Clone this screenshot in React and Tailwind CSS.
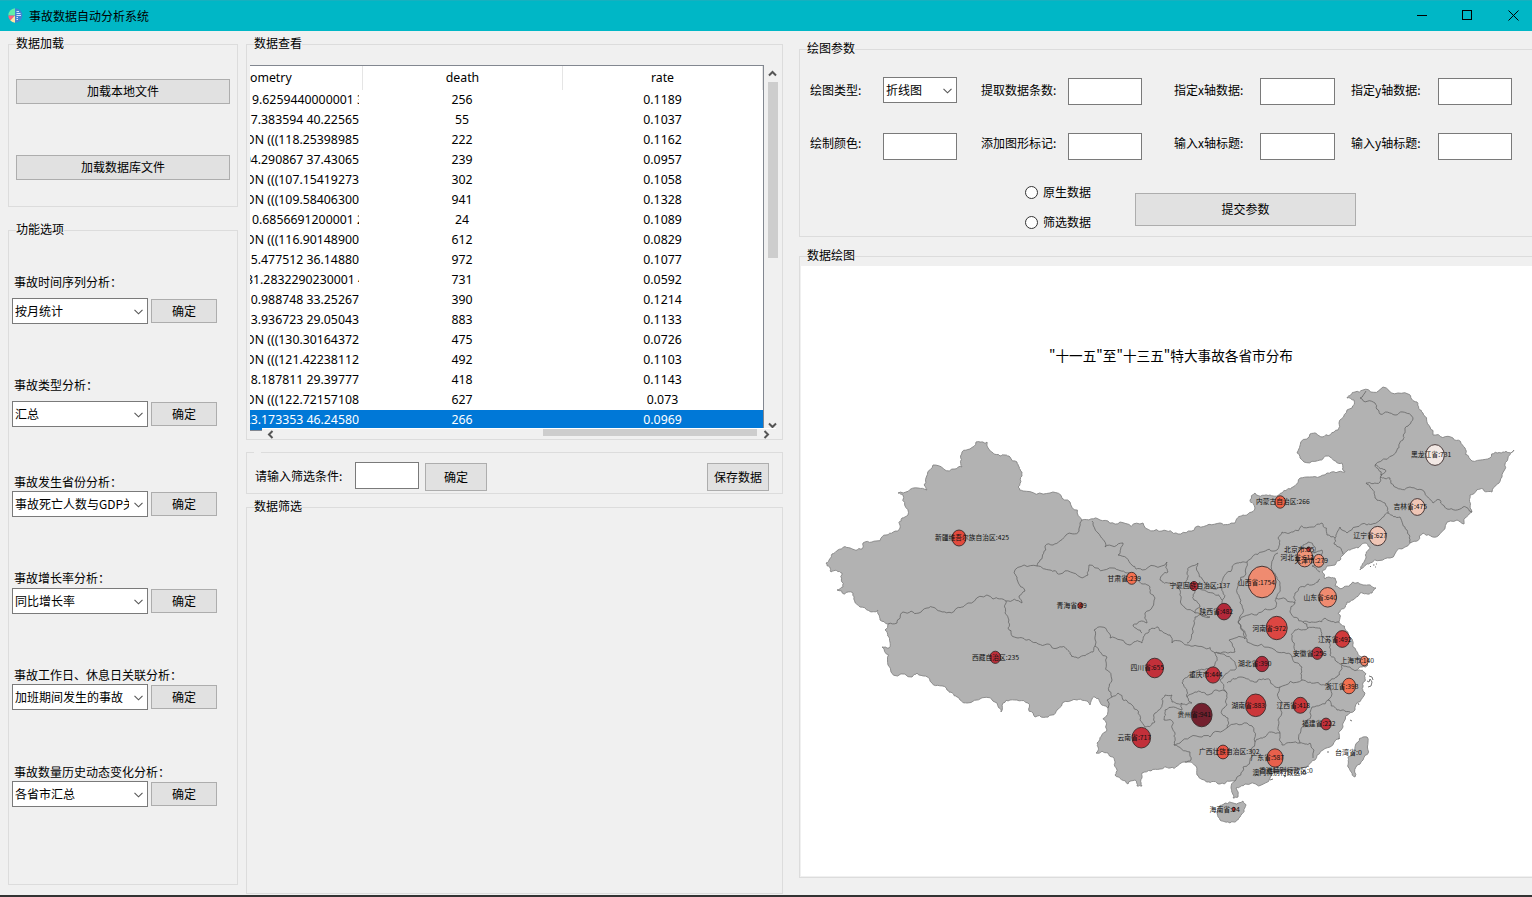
import React from "react";

/* ---------- small controls ---------- */

function Group({ title, className, legendClass = "", children }) {
  return (
    <fieldset className={`border border-[#dcdcdc] min-w-0 shrink-0 ${className}`}>
      <legend className={`ml-[7px] h-[17px] leading-[14px] whitespace-nowrap ${legendClass}`}>{title}</legend>
      {children}
    </fieldset>
  );
}

function Button({ children, className }) {
  return (
    <button className={`flex items-center justify-center border border-[#adadad] bg-[#e1e1e1] whitespace-nowrap leading-4 ${className}`}>
      {children}
    </button>
  );
}

function Chevron({ className = "" }) {
  return (
    <svg width="9" height="6" viewBox="0 0 9 6" className={`shrink-0 ${className}`}>
      <path d="M0.5 0.8 L4.5 4.8 L8.5 0.8" fill="none" stroke="#555" strokeWidth="1.1" />
    </svg>
  );
}

function Combo({ children, className }) {
  return (
    <div className={`flex h-[26px] items-center justify-between border border-[#7a7a7a] bg-white pl-[2px] pr-[4px] ${className}`}>
      <span className="mb-px overflow-hidden whitespace-nowrap leading-4">{children}</span>
      <Chevron className="mt-[2px]" />
    </div>
  );
}

function Field({ className = "" }) {
  return <input className={`block h-[27px] border border-[#7a7a7a] bg-white outline-none ${className}`} />;
}

function ScrollArrow({ d, className = "" }) {
  return (
    <svg width="9" height="9" viewBox="0 0 9 9" className={`shrink-0 ${className}`}>
      <path d={d} fill="none" stroke="#555" strokeWidth="2" />
    </svg>
  );
}

/* ---------- title bar ---------- */

function TitleBar() {
  return (
    <header className="flex h-[31px] shrink-0 items-center border-t border-[#17b0bf] bg-[#00b7c6] pl-2">
      <svg width="15" height="15" viewBox="0 0 15 15" className="-mt-px">
        <path d="M7 7.5V0.2A7.3 7.3 0 0 0 0.3 7.5Z" fill="#5ff0a8" />
        <path d="M7 7.5H0.3A7.3 7.3 0 0 0 2.3 12.5Z" fill="#ff5f7e" />
        <path d="M7 7.5L2.3 12.5A7.3 7.3 0 0 0 7 14.8Z" fill="#ffe6a0" />
        <path d="M7 0.2A7.3 7.3 0 0 1 7 14.8Z" fill="#3f84d2" />
        <path d="M8.5 3.5H11M8.5 5.5H12.5M8.5 7.5H13M8.5 9.5H10M8.5 11.5H10" stroke="#d5e8ff" strokeWidth="1" />
      </svg>
      <span className="-mt-px ml-[6px] leading-4">事故数据自动分析系统</span>
      <div className="-mt-[2px] ml-auto flex items-center gap-[35px] pr-[13px]">
        <svg width="10" height="11" viewBox="0 0 10 11"><path d="M0 5.5H10" stroke="#000" /></svg>
        <svg width="11" height="11" viewBox="0 0 11 11"><rect x="0.5" y="0.5" width="9" height="9" fill="none" stroke="#000" /></svg>
        <svg width="11" height="11" viewBox="0 0 11 11"><path d="M0.5 0.5L10.5 10.5M10.5 0.5L0.5 10.5" stroke="#000" /></svg>
      </div>
    </header>
  );
}

/* ---------- left column ---------- */

const ANALYSES = [
  { label: "事故时间序列分析：", value: "按月统计", mt: "mt-[35px]", gap: "mt-[8px]" },
  { label: "事故类型分析：", value: "汇总", mt: "mt-[53px]", gap: "mt-[8px]" },
  { label: "事故发生省份分析：", value: "事故死亡人数与GDP关系", mt: "mt-[47px]", gap: "mt-px" },
  { label: "事故增长率分析：", value: "同比增长率", mt: "mt-[53px]", gap: "mt-[2px]" },
  { label: "事故工作日、休息日关联分析：", value: "加班期间发生的事故", mt: "mt-[53px]", gap: "mt-px" },
  { label: "事故数量历史动态变化分析：", value: "各省市汇总", mt: "mt-[54px]", gap: "mt-px" },
];

function LeftColumn() {
  return (
    <div className="flex w-[230px] shrink-0 flex-col pt-[5px]">
      <Group title="数据加载" className="h-[171px]">
        <Button className="ml-[7px] mt-[26px] h-[25px] w-[214px] pb-px">加载本地文件</Button>
        <Button className="ml-[7px] mt-[51px] h-[25px] w-[214px] pb-px">加载数据库文件</Button>
      </Group>
      <Group title="功能选项" className="mt-[15px] h-[663px]">
        {ANALYSES.map((a) => (
          <div key={a.label} className={a.mt}>
            <div className="ml-[5px] h-4 whitespace-nowrap leading-4">{a.label}</div>
            <div className={`ml-[3px] flex items-center gap-[3px] ${a.gap}`}>
              <Combo className="w-[136px]">
                <span className="block w-[114px] overflow-hidden">{a.value}</span>
              </Combo>
              <Button className="h-6 w-[66px]">确定</Button>
            </div>
          </div>
        ))}
      </Group>
    </div>
  );
}

/* ---------- data table ---------- */

const ROWS = [
  ["9.6259440000001 3", "256", "0.1189", "pl-[2px]"],
  ["7.383594 40.22565", "55", "0.1037", "justify-end"],
  ["ON (((118.25398985", "222", "0.1162", "justify-end"],
  ["04.290867 37.43065", "239", "0.0957", "justify-end"],
  ["ON (((107.15419273", "302", "0.1058", "justify-end"],
  ["ON (((109.58406300", "941", "0.1328", "justify-end"],
  ["0.6856691200001 2", "24", "0.1089", "pl-[2px]"],
  ["ON (((116.90148900", "612", "0.0829", "justify-end"],
  ["5.477512 36.14880", "972", "0.1077", "justify-end"],
  ["31.2832290230001 4", "731", "0.0592", "-ml-[4px]"],
  ["0.988748 33.25267", "390", "0.1214", "justify-end"],
  ["3.936723 29.05043", "883", "0.1133", "justify-end"],
  ["ON (((130.30164372", "475", "0.0726", "justify-end"],
  ["ON (((121.42238112", "492", "0.1103", "justify-end"],
  ["8.187811 29.39777", "418", "0.1143", "justify-end"],
  ["ON (((122.72157108", "627", "0.073", "justify-end"],
  ["23.173353 46.24580", "266", "0.0969", "justify-end"],
];

function DataTable() {
  return (
    <div className="ml-[3px] mt-[12px] w-[531px] text-[12.3px] font-[Noto_Sans]">
      <div className="flex">
        <div className="h-[363px] w-[514px] shrink-0 overflow-hidden border-r border-t border-[#828790] bg-white">
          <div className="flex h-6 leading-[23px]">
            <div className="w-[113px] shrink-0 border-r border-[#e5e5e5]">ometry</div>
            <div className="w-[200px] shrink-0 border-r border-[#e5e5e5] text-center">death</div>
            <div className="w-[200px] shrink-0 border-r border-[#e5e5e5] text-center">rate</div>
          </div>
          {ROWS.map(([geo, death, rate, align], i) => (
            <div key={i} className={`flex h-5 leading-[19px] ${i === 16 ? "bg-[#0078d7] text-white" : ""}`}>
              <div className="w-[109px] shrink-0 overflow-hidden">
                <div className={`flex whitespace-pre ${align}`}>{geo}</div>
              </div>
              <div className="ml-[3px] w-[200px] text-center">{death}</div>
              <div className="w-[201px] text-center">{rate}</div>
            </div>
          ))}
        </div>
        <div className="flex h-[363px] w-[17px] flex-col items-center">
          <ScrollArrow className="mt-[4px] h-[9px]" d="M1 6.5L4.5 3L8 6.5" />
          <div className="mt-[4px] h-[176px] w-[10px] bg-[#cdcdcd]" />
          <ScrollArrow className="-mb-px mt-auto" d="M1 3.5L4.5 7L8 3.5" />
        </div>
      </div>
      <div className="flex h-[10px]">
        <div className="h-[3px] w-[12px] border-b border-[#828790] bg-[#0078d7]" />
        <div className="flex w-[514px] items-start border-t border-white">
          <ScrollArrow className="ml-[4px] mt-px" d="M6.5 1L3 4.5L6.5 8" />
          <div className="ml-[268px] h-[7px] w-[214px] bg-[#cdcdcd]" />
          <ScrollArrow className="ml-[5px] mt-px" d="M2.5 1L6 4.5L2.5 8" />
        </div>
      </div>
    </div>
  );
}

function MiddleColumn() {
  return (
    <div className="ml-2 flex w-[537px] shrink-0 flex-col pt-[5px]">
      <Group title="数据查看" className="h-[404px]">
        <DataTable />
      </Group>
      <Group title="" legendClass="w-[7px]" className="mt-1 h-[50px]">
        <div className="flex items-start pl-[8px]">
          <span className="mt-[7px] w-[100px] leading-4">请输入筛选条件:</span>
          <Field className="mt-px w-[64px]" />
          <Button className="ml-[6px] mt-[2px] h-[28px] w-[62px]">确定</Button>
          <Button className="ml-auto mr-[13px] mt-[2px] h-[28px] w-[62px]">保存数据</Button>
        </div>
      </Group>
      <Group title="数据筛选" className="mt-[5px] h-[395px]" />
    </div>
  );
}

/* ---------- map ---------- */

const OUTLINE =
  "826,563 832,554 838,550 850,548 862,549 863,543 872,542 886,535 900,528 902,518 908,515 903,495 898,493 918,488 927,490 924,485 933,465 955,469 962,467 962,452 970,449 976,442 987,442 988,448 1000,456 1010,457 1017,462 1022,472 1018,487 1023,491 1050,493 1070,502 1082,520 1100,520 1120,522 1143,523 1162,531 1178,534 1198,526 1220,523 1235,523 1243,515 1255,508 1250,500 1255,493 1270,495 1282,493 1293,487 1307,477 1327,473 1345,472 1342,463 1330,457 1320,460 1300,458 1297,453 1310,434 1322,437 1338,430 1339,423 1352,408 1354,400 1347,398 1355,392 1363,390 1383,387 1408,394 1417,402 1423,413 1430,427 1433,435 1453,438 1465,448 1470,459 1490,458 1503,452 1514,450 1508,458 1502,477 1492,492 1480,489 1470,495 1472,512 1465,518 1464,524 1457,520 1438,536 1423,533 1410,543 1390,558 1370,563 1360,570 1366,558 1370,547 1365,543 1355,548 1343,555 1335,565 1327,566 1322,572 1325,579 1335,578 1335,586 1343,588 1353,582 1363,585 1376,588 1372,593 1360,593 1353,600 1347,602 1338,613 1339,622 1348,632 1353,647 1367,657 1368,665 1357,670 1366,674 1363,683 1365,693 1355,710 1343,727 1330,747 1315,760 1300,768 1270,778 1245,784 1236,788 1238,797 1233,798 1231,788 1235,781 1220,784 1207,782 1197,775 1196,766 1185,762 1170,768 1160,769 1142,773 1142,786 1137,786 1135,780 1128,784 1115,775 1115,763 1108,753 1096,753 1097,743 1107,730 1108,708 1100,702 1095,697 1090,705 1077,700 1057,710 1052,715 1035,717 1028,703 1010,700 1003,703 1001,712 997,703 967,703 957,697 947,690 932,683 917,673 912,677 888,665 882,647 889,648 890,642 885,630 888,624 880,620 878,610 860,607 853,593 837,590 843,587 842,573 831,572";
const TAIWAN = "1367,737 1368,742 1363,760 1355,777 1348,767 1348,757 1358,742 1363,737";
const HAINAN = "1218,810 1225,803 1243,801 1246,805 1240,817 1230,823 1220,820";

const BORDERS = [
  "888,624 897,623 903,612 919,613 927,608 940,611 957,608 968,603 993,599 1006,601 1022,603 1019,596 1025,591 1017,577 1014,573 1037,566 1040,560 1045,546 1053,545 1066,535 1079,531 1080,523 1082,520",
  "1006,601 1005,613 1008,628 1018,638 1030,640 1047,644 1062,647 1070,654 1080,657 1093,652 1095,646 1107,657 1112,680 1112,697 1107,700 1108,708",
  "1112,697 1118,693 1123,700 1132,705 1140,720 1145,727 1155,722 1155,713 1162,705 1165,695 1172,695 1172,702 1182,703 1182,710 1165,710 1164,720 1173,722 1175,733 1174,745 1180,743 1202,737 1210,737 1227,728",
  "1174,745 1190,752 1191,760 1185,762",
  "1227,728 1228,718 1222,714 1227,705 1227,693 1223,690 1215,690 1208,695 1195,692 1187,697 1192,703 1182,704",
  "1187,697 1182,683 1190,675 1200,670 1212,668 1217,657 1215,652",
  "1095,646 1094,630 1102,627 1110,638 1130,645 1142,643 1148,633 1158,627 1170,635 1172,643 1187,645 1203,647 1215,653 1225,655 1235,662 1235,670 1225,675 1220,680 1227,693",
  "1216,652 1235,652 1229,640 1245,639 1244,632 1238,622 1240,603 1238,583 1247,562 1237,563 1223,578 1222,588 1222,603",
  "1222,600 1213,593 1195,590 1194,600 1200,607 1195,613 1185,608 1180,590 1170,583",
  "1195,590 1187,587 1188,577 1190,567 1198,563 1198,572 1203,580 1222,588",
  "1092,521 1098,533 1105,547 1123,543 1118,555 1132,565 1142,570 1167,562 1168,572 1160,580 1170,583",
  "1037,566 1050,570 1060,574 1080,577 1088,575 1089,565 1113,568 1127,573 1137,580 1150,587 1155,598 1145,613 1147,623 1133,625 1142,633",
  "1195,613 1210,617 1195,617 1193,633 1187,643",
  "1238,622 1257,615 1275,608 1276,598 1280,583 1273,572 1278,553",
  "1247,562 1262,552 1277,550 1278,538 1282,532 1293,532 1312,527 1322,523 1327,535 1335,538 1334,544 1343,554",
  "1335,538 1340,527 1347,533 1367,525 1380,520 1388,513 1400,517 1407,530 1410,543",
  "1388,513 1385,503 1375,498 1370,487 1366,483 1380,482 1382,475 1375,465 1397,450 1403,440 1405,430 1413,419 1403,412 1395,415 1380,414 1375,403 1360,398 1366,391",
  "1380,477 1390,478 1395,487 1410,487 1425,493 1433,503 1440,500 1447,509 1463,507 1472,512",
  "1375,465 1386,471 1380,475",
  "1276,598 1295,603 1295,593 1308,584 1320,579",
  "1295,603 1290,612 1303,622 1317,622 1325,618 1339,622",
  "1303,622 1308,628 1295,630 1292,640 1297,653 1292,657 1275,650 1247,642 1245,633 1238,622",
  "1292,657 1302,667 1302,680 1280,687 1270,680 1257,682 1240,677 1227,683",
  "1302,680 1315,683 1328,683 1337,677 1342,665 1350,667 1357,670",
  "1308,628 1320,628 1327,640 1330,655 1337,662 1342,665",
  "1280,687 1280,700 1278,720 1280,733 1282,745 1300,743 1302,727 1312,707 1328,700 1328,683",
  "1280,733 1265,737 1255,742 1247,723 1227,728",
  "1255,742 1252,757 1243,767 1235,781",
  "1328,700 1337,710 1350,712",
  "1300,743 1310,743 1313,758",
  "1300,550 1303,545 1308,542 1315,547 1314,553 1304,556 1300,550",
  "1314,553 1322,550 1320,560 1312,566 1320,572",
];

/* Adds fine irregularity to a coarse point list so that it reads as a natural border. */
function natural(list, closed) {
  let pts = list.split(" ").map((p) => p.split(",").map(Number));
  if (closed) pts.push(pts[0]);
  for (let pass = 0; pass < 3; pass++) {
    const next = [pts[0]];
    for (let i = 1; i < pts.length; i++) {
      const [ax, ay] = pts[i - 1];
      const [bx, by] = pts[i];
      const dx = bx - ax;
      const dy = by - ay;
      if (Math.hypot(dx, dy) > 2.5) {
        const s = Math.sin(ax * 12.9898 + by * 78.233 + pass * 3.7) * 43758.5453;
        const k = (s - Math.floor(s) - 0.5) * 0.42;
        next.push([(ax + bx) / 2 - dy * k, (ay + by) / 2 + dx * k]);
      }
      next.push(pts[i]);
    }
    pts = next;
  }
  return "M" + pts.map(([x, y]) => `${x.toFixed(1)} ${y.toFixed(1)}`).join("L") + (closed ? "Z" : "");
}

const BUBBLES = [
  [959, 538, 7, 8, "#e34a3d"], [1131.7, 578.3, 5.2, 6, "#f4704f"], [1080.3, 605.5, 2.5, 3, "#c5392f"],
  [1194, 586, 4, 4.6, "#c4303a"], [1224, 611.6, 7.4, 8.3, "#b3293a"], [1262, 582, 14, 15.8, "#ef8b70"],
  [1276.7, 628, 10.5, 11.7, "#dc4642"], [1154.7, 668, 8.8, 9.8, "#c2303a"], [1262, 664, 6.7, 7.7, "#b3293a"],
  [1213, 675, 7.3, 8.1, "#c2303a"], [1201.7, 715, 10.4, 11.8, "#73202e"], [1141.3, 737.7, 9.3, 10.3, "#c2303a"],
  [1223, 752, 6, 6.9, "#ea5444"], [1233.7, 809.3, 1.6, 2, "#c5302f"], [1255.7, 705.3, 10.2, 11.3, "#cb3639"],
  [1300.3, 705.3, 7.2, 8, "#cb3639"], [1326, 724, 5.2, 5.9, "#c2303a"], [1275, 758, 8, 9.2, "#e8604c"],
  [1349, 686, 6.6, 7.8, "#f4704f"], [1364.3, 661, 3.9, 4.8, "#f08468"], [1342.3, 639, 7.5, 8.4, "#d03a3b"],
  [1317.3, 653.3, 5.4, 6.1, "#b8303a"], [1327.7, 597.3, 8.8, 9.8, "#f08b70"], [1435, 455, 9.3, 10.4, "#f2e8e4"],
  [1417.3, 507, 7.4, 8.4, "#f0c6b6"], [1377.7, 536, 8.6, 9.6, "#f0c6b6"], [1304.7, 557.5, 8, 9.4, "#f09478"],
  [1318.7, 560.8, 5.4, 6.4, "#f09478"], [1308.7, 549.3, 2, 2.4, "#d0302f"], [1280.2, 502, 5.3, 6.2, "#ee6246"],
  [995.3, 657.3, 5.4, 6.1, "#bd2f3a"],
];

const LABELS = [
  [935, 538, "新疆维吾尔族自治区:425"], [972, 657.3, "西藏自治区:235"], [1056.5, 605.5, "青海省:49"],
  [1107.5, 578.3, "甘肃省:239"], [1169.5, 586, "宁夏回族自治区:137"], [1199.5, 611.7, "陕西省:482"],
  [1238, 582.3, "山西省:1754"], [1252.5, 628.3, "河南省:972"], [1130.5, 668, "四川省:655"],
  [1238, 664, "湖北省:390"], [1189, 675, "重庆市:444"], [1177.5, 715, "贵州省:941"],
  [1117.5, 737.7, "云南省:717"], [1199, 751.7, "广西壮族自治区:302"], [1209.5, 809.3, "海南省:24"],
  [1231.5, 705.3, "湖南省:883"], [1276.5, 705.7, "江西省:418"], [1302, 723.8, "福建省:222"],
  [1250.5, 758.2, "广东省:587"], [1325, 686.5, "浙江省:393"], [1340.5, 661, "上海市:140"],
  [1318, 639.5, "江苏省:492"], [1293, 653.5, "安徽省:256"], [1303.5, 597.8, "山东省:640"],
  [1411, 455.2, "黑龙江省:731"], [1393.5, 507.2, "吉林省:475"], [1353.5, 535.8, "辽宁省:627"],
  [1280.5, 558, "河北省:612"], [1294.5, 560.8, "天津市:279"], [1284, 549.5, "北京市:55"],
  [1256, 502, "内蒙古自治区:266"], [1335, 753, "台湾省:0"], [1259, 770.3, "香港特别行政区:0"],
  [1252.5, 772.3, "澳门特别行政区:0"],
];

function labelWidth(text) {
  let w = 0;
  for (const ch of text) w += ch.charCodeAt(0) > 255 ? 6.72 : 3.36;
  return w;
}

function ChinaMap() {
  return (
    <svg width="731" height="610" viewBox="801 266 731 610" className="ml-px mt-px block bg-white">
      <text x="1049" y="361" fontSize="13.6" textLength="244" lengthAdjust="spacingAndGlyphs">
        "十一五"至"十三五"特大事故各省市分布
      </text>
      <g fill="#b2b2b2" stroke="#858585" strokeWidth="0.9">
        <path d={natural(OUTLINE, true)} />
        <path d={natural(TAIWAN, true)} />
        <path d={natural(HAINAN, true)} />
      </g>
      <g fill="none" stroke="#606060" strokeWidth="0.75">
        {BORDERS.map((b) => (
          <path key={b} d={natural(b, false)} />
        ))}
      </g>
      <path
        d="M1370 566.5h1M1373 565h1.5M1376 564h1M1375 567h1M1367 681l2 1 1-3 2 3-1 4-3 1M1369 676l3 1 1 3M1358 703l1 2M1350 720l2 1M1338 739l2-1M1327 752l2 0M1306 767l3-1M1283 775l3 1-2 1M1270 780l3-1"
        fill="none"
        stroke="#777"
        strokeWidth="1"
      />
      <g stroke="#3a2a2a" strokeWidth="0.9">
        {BUBBLES.map(([x, y, rx, ry, fill]) => (
          <ellipse key={`${x}-${y}`} cx={x} cy={y} rx={rx} ry={ry} fill={fill} />
        ))}
      </g>
      <g fontSize="6.8" fill="#111">
        {LABELS.map(([x, y, text]) => (
          <text key={text} x={x} y={y + 2.2} textLength={labelWidth(text)} lengthAdjust="spacingAndGlyphs">
            {text}
          </text>
        ))}
      </g>
    </svg>
  );
}

/* ---------- right column ---------- */

function Radio({ children, className = "" }) {
  return (
    <label className={`flex h-4 items-center gap-[5px] ${className}`}>
      <span className="h-[13px] w-[13px] rounded-full border border-[#333] bg-white" />
      <span className="leading-4">{children}</span>
    </label>
  );
}

function RightColumn() {
  const cols = "grid grid-cols-[73px_98px_87px_106px_86px_91px_87px_74px] items-start pl-[10px]";
  return (
    <div className="ml-4 flex w-[740px] shrink-0 flex-col pt-[10px]">
      <Group title="绘图参数" className="h-[196px]">
        <div className={`${cols} mt-[19px] h-[28px]`}>
          <span className="mt-[5px] leading-4">绘图类型:</span>
          <Combo className="w-[74px]">折线图</Combo>
          <span className="mt-[5px] leading-4">提取数据条数:</span>
          <Field className="mt-px w-[74px]" />
          <span className="mt-[5px] leading-4">指定x轴数据:</span>
          <Field className="mt-px w-[75px]" />
          <span className="mt-[5px] leading-4">指定y轴数据:</span>
          <Field className="mt-px w-[74px]" />
        </div>
        <div className={`${cols} mt-[28px] h-[27px]`}>
          <span className="mt-[2px] leading-4">绘制颜色:</span>
          <Field className="w-[74px]" />
          <span className="mt-[2px] leading-4">添加图形标记:</span>
          <Field className="w-[74px]" />
          <span className="mt-[2px] leading-4">输入x轴标题:</span>
          <Field className="w-[75px]" />
          <span className="mt-[2px] leading-4">输入y轴标题:</span>
          <Field className="w-[74px]" />
        </div>
        <div className="ml-[225px] mt-[24px] flex items-start">
          <div className="w-[110px]">
            <Radio>原生数据</Radio>
            <Radio className="mt-[14px]">筛选数据</Radio>
          </div>
          <Button className="mt-[9px] h-[33px] w-[221px] pb-px">提交参数</Button>
        </div>
      </Group>
      <Group title="数据绘图" className="mt-[11px] h-[630px]">
        <ChinaMap />
      </Group>
    </div>
  );
}

export default function App() {
  return (
    <div
      lang="zh-CN"
      className="flex h-[897px] w-[1532px] flex-col overflow-hidden bg-[#f0f0f0] font-['Noto_Sans_CJK_SC',sans-serif] text-[12px] text-black"
    >
      <TitleBar />
      <main className="flex h-[864px] shrink-0 overflow-hidden pl-2">
        <LeftColumn />
        <MiddleColumn />
        <RightColumn />
      </main>
      <div className="h-[2px] shrink-0 bg-[#333333]" />
    </div>
  );
}
